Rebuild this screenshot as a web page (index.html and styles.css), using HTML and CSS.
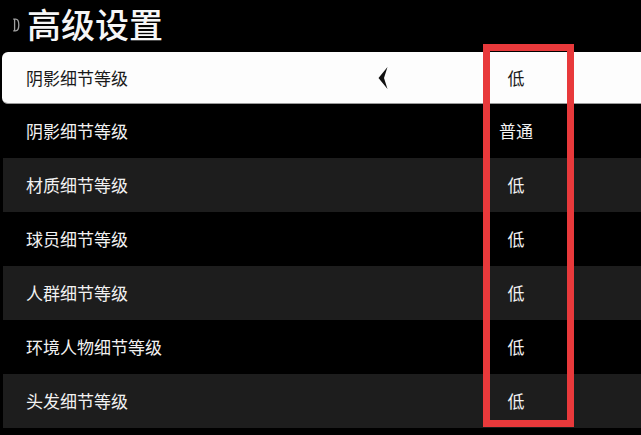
FILE: index.html
```html
<!DOCTYPE html>
<html lang="zh">
<head>
<meta charset="utf-8">
<link rel="stylesheet" href="styles.css">
</head>
<body>
<div class="screen">
  <header class="title-bar">
    <svg class="bumper" width="8" height="14" viewBox="0 0 8 14"><path d="M1.2 1.2 H3.6 Q6.8 1.2 6.8 7 Q6.8 12.8 3.6 12.8 H1.2 M2.6 1.2 V12.8" fill="none" stroke="#a0a0a0" stroke-width="1.3"/></svg>
    <h1 class="title">高级设置</h1>
  </header>
  <div class="list">
    <div class="row selected">
      <span class="label">阴影细节等级</span>
      <svg class="arrow" width="10" height="24" viewBox="0 0 10 24"><path d="M9.5 1 L0.5 12 L9.5 23 L6 12 Z" fill="#111"/></svg>
      <span class="value">低</span>
    </div>
    <div class="row dark">
      <span class="label">阴影细节等级</span>
      <span class="value">普通</span>
    </div>
    <div class="row gray">
      <span class="label">材质细节等级</span>
      <span class="value">低</span>
    </div>
    <div class="row dark">
      <span class="label">球员细节等级</span>
      <span class="value">低</span>
    </div>
    <div class="row gray">
      <span class="label">人群细节等级</span>
      <span class="value">低</span>
    </div>
    <div class="row dark">
      <span class="label">环境人物细节等级</span>
      <span class="value">低</span>
    </div>
    <div class="row gray">
      <span class="label">头发细节等级</span>
      <span class="value">低</span>
    </div>
  </div>
  <div class="highlight-box"></div>
</div>
</body>
</html>
```

FILE: styles.css
```css
html, body {
  margin: 0;
  padding: 0;
  background: #000;
}
body {
  font-family: "Noto Sans CJK SC", "Noto Sans", sans-serif;
  color: #f2f2f2;
  overflow: hidden;
}
.screen {
  position: relative;
  width: 641px;
  height: 435px;
  background: #000;
  overflow: hidden;
}
.title-bar {
  height: 52px;
  display: flex;
  align-items: center;
  padding-left: 12px;
  box-sizing: border-box;
}
.bumper {
  margin-top: -2px;
  margin-right: 7px;
}
.title {
  margin: 0;
  font-size: 34px;
  font-weight: 500;
  line-height: 1;
  color: #f6f6f6;
  margin-top: -4px;
}
.list {
  margin-left: 3px;
}
.row {
  height: 54px;
  display: grid;
  grid-template-columns: 352px 10px 82px 92px 1fr;
  align-items: center;
  padding-left: 23px;
  padding-bottom: 2px;
  box-sizing: border-box;
  font-size: 17px;
  font-weight: 400;
}
.row .label {
  grid-column: 1;
}
.row .arrow {
  grid-column: 2;
}
.row .value {
  grid-column: 4;
  text-align: center;
}
.row.selected {
  height: 52px;
  margin-left: -1px;
  background: #fdfdfd;
  color: #1a1a1a;
  border-radius: 6px 0 0 6px;
  border-bottom: 1px solid #9a9a9a;
  padding-left: 24px;
  padding-bottom: 0;
}
.row.dark {
  background: #000;
}
.row.gray {
  background: #1d1d1d;
}
.highlight-box {
  position: absolute;
  left: 483px;
  top: 44px;
  width: 91px;
  height: 383px;
  box-sizing: border-box;
  border: 7px solid #e8393b;
}
```
